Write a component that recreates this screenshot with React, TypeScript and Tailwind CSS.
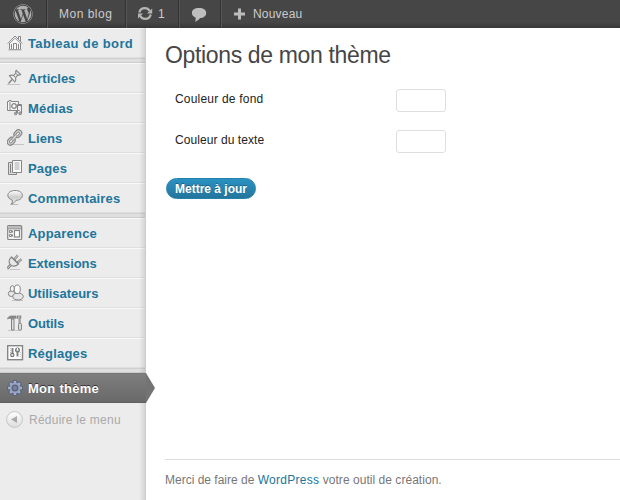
import type { ReactNode } from "react";
import { FaWordpress } from "react-icons/fa";

type IconProps = { children: ReactNode };

function Glyph({ children }: IconProps) {
  return (
    <svg width="18" height="18" viewBox="0 0 18 18" fill="none" stroke="#858585" strokeWidth="1" className="shrink-0">
      {children}
    </svg>
  );
}

const icons: Record<string, ReactNode> = {
  home: (
    <Glyph>
      <path d="M.8 9.500 8 2l7.200 7.500M11.500 5.500v-3h2v5M2.500 9v6.500h11V9" fill="#f8f8f8" />
      <path d="M2.800 9.200 8 4.200l5.200 5" strokeWidth=".8" />
      <path d="M6.500 15V9.500h3V15M4.500 10v5M11.500 10v5" />
      <path d="M1 16h14" stroke="#bbb" />
    </Glyph>
  ),
  pin: (
    <Glyph>
      <path d="M0 15.500h13" stroke="#c4c4c4" />
      <path d="m1.500 14.500 4.500-5" strokeWidth="1.300" />
      <path d="M2.500 6.800c1.500-.9 3-.7 4.200-.2L8.800 4c-.4-1-.2-1.900.4-2.700L13.600 5.500c-.8.7-1.700.8-2.700.5L8.600 8.700c.5 1.500.3 2.900-.8 4.300z" fill="#ededed" strokeWidth="1.100" />
      <path d="m8.800 4.300 2 1.900M6.700 6.800l1.700 1.700" />
    </Glyph>
  ),
  media: (
    <Glyph>
      <path d="M.5 11.500V2.500h1.500V1.500h2v1h7.500v9z" fill="#f6f6f6" />
      <path d="M3 3v8.500" />
      <circle cx="7" cy="7" r="2.300" fill="#f8f8f8" strokeWidth="1.300" />
      <path d="M9.500 14.500V11.500M10.500 14V5.500h4v8.500" fill="#eee" />
      <path d="M10.500 6.500h4M9.500 11.500h3" strokeWidth="1.200" />
      <circle cx="8.700" cy="14.500" r="1.300" fill="#aaa" />
      <circle cx="13.200" cy="14.300" r="1.400" fill="#aaa" />
    </Glyph>
  ),
  link: (
    <Glyph>
      <path d="M5 15.500h12" stroke="#c4c4c4" />
      <g transform="rotate(-48 7.500 8.500)">
        <rect x="-1.700" y="5.300" width="8.400" height="6.400" rx="3.200" fill="#d8d8d8" strokeWidth="1.200" />
        <rect x=".6" y="7.300" width="4" height="2.400" rx="1.200" fill="#f5f5f5" />
        <rect x="8.300" y="5.300" width="8.400" height="6.400" rx="3.200" fill="#d8d8d8" strokeWidth="1.200" />
        <rect x="10.400" y="7.300" width="4" height="2.400" rx="1.200" fill="#f5f5f5" />
        <path d="M4.500 8.500h6" strokeWidth="3.200" />
        <path d="M4.500 8.500h6" stroke="#e2e2e2" strokeWidth="1.400" />
      </g>
    </Glyph>
  ),
  pages: (
    <Glyph>
      <path d="M5 3.500H1.500v12h8V13" fill="#ddd" />
      <path d="M5.500 1.500h9v12h-9z" fill="#f9f9f9" />
      <path d="M7.500 4h5M7.500 6h5M7.500 8h5M7.500 10h5" stroke="#aaa" />
      <path d="M3.500 5v9" />
    </Glyph>
  ),
  comment: (
    <Glyph>
      <defs>
        <linearGradient id="bubble" x2="0" y2="1">
          <stop stopColor="#fff" />
          <stop offset=".5" stopColor="#ccc" />
          <stop offset="1" stopColor="#f5f5f5" />
        </linearGradient>
      </defs>
      <path d="M3 15.500h8" stroke="#bbb" />
      <path d="M8 1.500c4.500 0 7.400 2 7.400 5s-3 4.800-6.400 4.800c-1 1.400-2 2.900-4.500 3.700.8-1.200 1-2.700.7-4C2.700 10.200.8 8.500.8 6.500c0-3 3-5 7.200-5z" fill="url(#bubble)" />
    </Glyph>
  ),
  appearance: (
    <Glyph>
      <rect x=".7" y="1.500" width="14" height="14" rx="1" fill="#f4f4f4" strokeWidth="1.200" />
      <path d="M1.500 3h12.500" stroke="#bbb" strokeWidth="2" />
      <path d="M1 4.800h14" />
      <path d="M2.500 6.500h2v2h-2zM2.500 10.500h2v2h-2zM5.500 6.500v2M5.500 10.500v2" />
      <rect x="7.500" y="6.500" width="5" height="6.500" fill="#fff" strokeWidth="1.200" />
    </Glyph>
  ),
  plug: (
    <Glyph>
      <path d="M3 15.500h10" stroke="#c4c4c4" />
      <path d="m0 14.800 4-4" strokeWidth="3" />
      <path d="m0 14.800 4-4" stroke="#ddd" />
      <path d="M4.500 3c-2.500 2.300-3 5.200-1.200 7.500 2 2.300 5 2.300 8.200-.5z" fill="#e8e8e8" strokeWidth="1.100" />
      <path d="m7 6 3.800-4.800M10 9l4.500-3.800" strokeWidth="2.400" />
      <path d="m7 6 3.800-4.800M10 9l4.500-3.800" stroke="#e6e6e6" strokeWidth=".8" />
      <path d="M4.500 3 11.500 10" strokeWidth="1.300" />
    </Glyph>
  ),
  users: (
    <Glyph>
      <path d="M5 16.500h11" stroke="#c4c4c4" />
      <ellipse cx="4.500" cy="9.700" rx="3.200" ry="2.800" fill="#e8e8e8" />
      <ellipse cx="5.300" cy="4.700" rx="2" ry="3" fill="#f7f7f7" />
      <ellipse cx="11" cy="12.500" rx="5.300" ry="3.500" fill="#e5e5e5" />
      <ellipse cx="10.300" cy="5.300" rx="3" ry="4.300" fill="#fafafa" />
    </Glyph>
  ),
  tools: (
    <Glyph>
      <path d="M1 16.500h13" stroke="#c8c8c8" />
      <path d="M.5 5c.6-2 1.800-3 3.500-3h5v2.200H6.500V5H4V4.200c-1.500-.1-2.500.1-3.500.8z" fill="#888" strokeWidth=".8" />
      <path d="M4.500 5h2.500v11H4.500z" fill="#ddd" />
      <path d="M10.500 1.500v3M13.500 1.500v3" strokeWidth="1.500" />
      <path d="M9.800 4.500h1M12 1v9" strokeWidth=".8" />
      <path d="M13 4v6" strokeWidth="1.200" />
      <rect x="11.500" y="9.500" width="3" height="6.500" rx="1" fill="#ddd" />
    </Glyph>
  ),
  settings: (
    <Glyph>
      <rect x=".7" y="1.700" width="14.800" height="14" fill="#fff" strokeWidth="1.400" />
      <path d="M5.500 4v5M10.500 7v5.500" strokeWidth="2" />
      <circle cx="5.300" cy="11" r="1.600" stroke="#777" strokeWidth="1.200" fill="#eee" />
      <circle cx="10.500" cy="6" r="1.900" stroke="#777" strokeWidth="1.200" fill="#ccc" />
      <path d="M10.500 4v2" stroke="#fff" />
      <path d="M3 4.500h1M3 6.500h1M3 8.500h1M12.800 8.500h1M12.800 10.500h1M12.800 12.500h1" stroke="#bbb" />
    </Glyph>
  ),
  gear: (
    <Glyph>
      <g transform="translate(-1 0)">
        <g stroke="#56627c" strokeWidth="4.200">
          <path d="M9 1.200v15.600M1.200 9h15.600M3.500 3.500l11 11M14.500 3.500l-11 11" />
        </g>
        <g stroke="#a3afcb" strokeWidth="2.400">
          <path d="M9 2v14M2 9h14M4.100 4.100l9.800 9.800M13.900 4.100l-9.800 9.800" />
        </g>
        <circle cx="9" cy="9" r="5.400" fill="#98a5c3" stroke="none" />
        <circle cx="9" cy="9" r="2.800" stroke="#596680" strokeWidth="1.400" fill="#7b8498" />
      </g>
    </Glyph>
  ),
};

type Item = { label: string; icon: string; spacing: string };

const groups: Item[][] = [
  [{ label: "Tableau de bord", icon: "home", spacing: "tracking-[0.38px]" }],
  [
    { label: "Articles", icon: "pin", spacing: "tracking-[-0.05px]" },
    { label: "Médias", icon: "media", spacing: "tracking-[0.2px]" },
    { label: "Liens", icon: "link", spacing: "tracking-[0.05px]" },
    { label: "Pages", icon: "pages", spacing: "tracking-[0.15px]" },
    { label: "Commentaires", icon: "comment", spacing: "tracking-[0.17px]" },
  ],
  [
    { label: "Apparence", icon: "appearance", spacing: "tracking-[0.2px]" },
    { label: "Extensions", icon: "plug", spacing: "tracking-[-0.08px]" },
    { label: "Utilisateurs", icon: "users", spacing: "tracking-[-0.04px]" },
    { label: "Outils", icon: "tools", spacing: "tracking-[-0.12px]" },
    { label: "Réglages", icon: "settings", spacing: "tracking-[0.2px]" },
  ],
];

function AdminBar() {
  return (
    <header className="flex h-7 shrink-0 bg-gradient-to-t from-[#373737] from-0% via-[#464646] via-20% to-[#464646] text-[12px] leading-7 text-[#ccc]">
      <div className="flex w-[46px] items-center pl-[13px]">
        <FaWordpress size={20} color="#b0b0b0" />
      </div>
      <div className="w-[79px] border-l border-[#333] pl-3 tracking-[0.5px] shadow-[inset_1px_0_#555]">Mon blog</div>
      <div className="flex w-[53px] items-center border-l border-[#333] pl-3 shadow-[inset_1px_0_#555]">
        <svg width="15" height="16" viewBox="0 0 15 16" fill="none" stroke="#b5b5b5" strokeWidth="2.200">
          <path d="M1.300 6.500C2 4 4 2.200 6.800 2.200c2.200 0 3.900 1 4.800 2.800M12.700 8.500c-.6 2.700-2.700 4.400-5.500 4.400-2.200 0-4-1.100-4.900-2.900" />
          <path d="M14.200 2.500v5H9zM-.2 12.800V7.600H5z" fill="#b5b5b5" stroke="none" />
        </svg>
        <span className="ml-[5px]">1</span>
      </div>
      <div className="flex w-[42px] items-center border-l border-[#333] pl-3 shadow-[inset_1px_0_#555]">
        <svg width="16" height="15" viewBox="0 0 16 15">
          <path d="M8 1c4.300 0 7.200 1.900 7.200 4.900S12.500 10.800 9 11c-1 1.600-2.500 2.800-5 3.700.7-1.400.8-2.800.5-4.300C2.300 9.700.9 8 .9 5.900.9 2.900 3.700 1 8 1z" fill="#bebebe" />
        </svg>
      </div>
      <div className="flex items-center border-l border-[#333] pl-3 shadow-[inset_1px_0_#555]">
        <svg width="13" height="13" viewBox="0 0 13 13">
          <path d="M5 .5h3v4h4v3H8v4H5v-4H1v-3h4z" fill="#bbb" />
        </svg>
        <span className="ml-[7px] tracking-[0.2px]">Nouveau</span>
      </div>
    </header>
  );
}

function Separator() {
  return <div className="h-[5px] border-t border-b border-t-[#d0d0d0] border-b-[#ccc] bg-[#dfdfdf]" />;
}

function MenuRow({ label, icon, spacing }: Item) {
  return (
    <a className="flex h-[30px] items-center gap-[3px] border-t border-b border-t-[#f9f9f9] border-b-[#dfdfdf] pl-[7px] text-[13px] font-bold text-[#21759b]">
      {icons[icon]}
      <span className={`pt-0.5 ${spacing}`}>{label}</span>
    </a>
  );
}

function Sidebar() {
  return (
    <nav className="relative w-[146px] shrink-0 border-r border-[#ccc] bg-[#ececec]">
      {groups.map((items, index) => (
        <div key={index}>
          {items.map((item) => (
            <MenuRow key={item.label} {...item} />
          ))}
          <Separator />
        </div>
      ))}
      <a className="relative z-10 flex h-[30px] w-[146px] items-center gap-[3px] border-t border-b border-t-[#777] border-b-[#606060] bg-gradient-to-b from-[#7e7e7e] to-[#696969] pl-[7px] text-[13px] font-bold tracking-[0.27px] text-white [text-shadow:0_-1px_0_#333]">
        {icons.gear}
        <span className="pt-0.5">Mon thème</span>
        <svg className="absolute -top-px left-[146px]" width="9" height="30" viewBox="0 0 9 30">
          <path d="M0 0 9 15 0 30z" fill="#737373" />
        </svg>
      </a>
      <div className="flex h-[33px] items-center pl-[6px] text-[12px] tracking-[0.25px] text-[#aaa]">
        <svg width="17" height="17" viewBox="0 0 17 17" className="mr-[6px]">
          <defs>
            <linearGradient id="round" x2="0" y2="1">
              <stop stopColor="#fff" />
              <stop offset="1" stopColor="#ddd" />
            </linearGradient>
          </defs>
          <circle cx="8.500" cy="8.500" r="7.900" fill="url(#round)" stroke="#c4c4c4" />
          <path d="M11 5v7L5 8.500z" fill="#aaa" />
        </svg>
        Réduire le menu
      </div>
      <div className="absolute inset-y-0 right-0 w-[6px] bg-gradient-to-r from-transparent to-black/10" />
    </nav>
  );
}

function ColorField({ label, spacing }: { label: string; spacing: string }) {
  return (
    <label className="flex h-[41px] items-start pl-[10px] text-[12px] text-[#222]">
      <span className={`w-[221px] pt-[2px] leading-4 ${spacing}`}>{label}</span>
      <input className="h-[23px] w-[50px] rounded-[3px] border border-[#dfdfdf] bg-white" />
    </label>
  );
}

export default function App() {
  return (
    <div className="flex h-[500px] w-[620px] flex-col overflow-hidden bg-white font-['Liberation_Sans',Arial,sans-serif]">
      <AdminBar />
      <div className="flex min-h-0 flex-1">
        <Sidebar />
        <main className="flex flex-1 flex-col pl-[19px]">
          <h1 className="pt-[11px] text-[23px] leading-8 tracking-[-0.35px] text-[#464646]">Options de mon thème</h1>
          <form className="pt-[18px]">
            <ColorField label="Couleur de fond" spacing="tracking-[0.2px]" />
            <ColorField label="Couleur du texte" spacing="tracking-[0.07px]" />
            <button
              type="button"
              className="mt-[7px] ml-px flex h-[21px] w-[90px] items-center justify-center rounded-full border border-[#2380aa] bg-gradient-to-b from-[#2a92c2] to-[#23759c] text-[12px] font-bold text-white [text-shadow:0_-1px_0_rgba(0,0,0,.3)]"
            >
              Mettre à jour
            </button>
          </form>
          <footer className="mt-auto h-[41px] border-t border-[#dfdfdf] pt-3 text-[12px] leading-4 text-[#777]">
            Merci de faire de <a className="tracking-[0.28px] text-[#21759b]">WordPress</a>{" "}
            <span className="tracking-[0.04px]">votre outil de création.</span>
          </footer>
        </main>
      </div>
    </div>
  );
}
